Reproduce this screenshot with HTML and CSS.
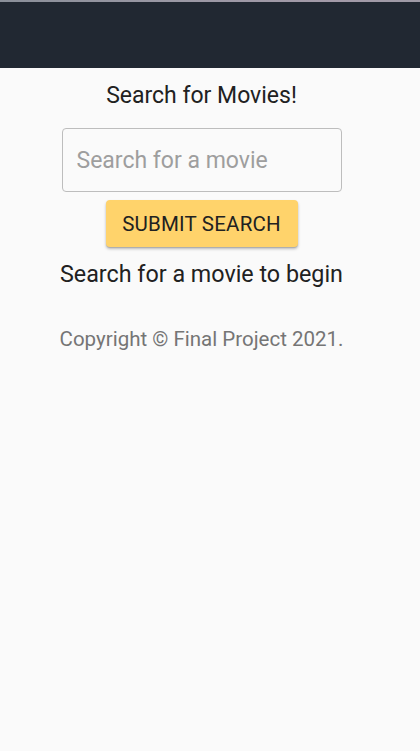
FILE: index.html
```html
<!DOCTYPE html>
<html lang="en">
<head>
<meta charset="utf-8">
<title>Movie Search</title>
<link rel="stylesheet" href="styles.css">
</head>
<body>
<div class="topline"></div>
<header class="navbar"></header>
<main class="content">
  <h1 class="title">Search for Movies!</h1>
  <form class="search-form">
    <input class="search-input" type="text" placeholder="Search for a movie">
    <button class="submit-btn" type="button">Submit Search</button>
  </form>
  <p class="status">Search for a movie to begin</p>
  <footer class="footer">Copyright © Final Project 2021.</footer>
</main>
</body>
</html>
```
FILE: styles.css
```css
html, body {
  margin: 0;
  padding: 0;
  background: #fafafa;
  font-family: Roboto, "Liberation Sans", sans-serif;
  color: #212121;
}
.topline {
  height: 2px;
  background: linear-gradient(90deg, #8a8f99, #9a98a4 40%, #a39aa8 80%, #9e9aa6);
}
.navbar {
  height: 66px;
  background: #212832;
}
.content {
  display: flex;
  flex-direction: column;
  align-items: center;
  padding-right: 17px;
}
.title {
  margin: 13px 0 0;
  font-size: 23px;
  font-weight: 400;
  line-height: 30px;
}
.search-form {
  display: flex;
  flex-direction: column;
  align-items: center;
  margin-top: 17px;
}
.search-input {
  box-sizing: border-box;
  width: 280px;
  height: 64px;
  border: 1px solid #bdbdbd;
  border-radius: 4px;
  background: #fafafa;
  padding: 0 14px;
  font-family: Roboto, "Liberation Sans", sans-serif;
  font-size: 23px;
  color: #212121;
  outline: none;
}
.search-input::placeholder {
  color: #9e9e9e;
}
.submit-btn {
  margin-top: 8px;
  box-sizing: border-box;
  width: 192px;
  height: 47px;
  border: none;
  border-radius: 4px;
  background: #ffd36b;
  color: #212121;
  font-family: Roboto, "Liberation Sans", sans-serif;
  font-size: 20.5px;
  font-weight: 400;
  text-transform: uppercase;
  letter-spacing: 0.2px;
  box-shadow: 0 2px 3px rgba(0,0,0,0.25), 0 1px 1px rgba(0,0,0,0.12);
  cursor: pointer;
}
.status {
  margin: 11px 0 0;
  font-size: 23.3px;
  line-height: 32px;
}
.footer {
  margin-top: 36px;
  font-size: 20.5px;
  line-height: 26px;
  color: #757575;
}
```
